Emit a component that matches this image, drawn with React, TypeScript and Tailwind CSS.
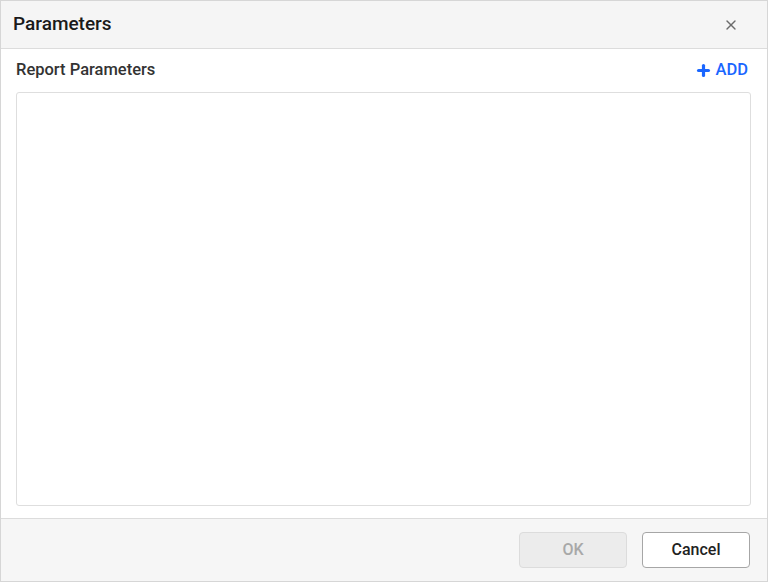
import { Plus, X } from "lucide-react";

export default function App() {
  return (
    <div
      className="flex h-[582px] w-[768px] flex-col border border-[#d6d6d6] bg-white"
      style={{ fontFamily: "Roboto, 'Liberation Sans', sans-serif" }}
    >
      {/* header */}
      <div className="flex h-[48px] shrink-0 items-center justify-between border-b border-[#dcdcdc] bg-[#f5f5f5] pl-[12px] pr-[28px]">
        <span className="text-[19px] font-medium text-[#1a1a1a]">Parameters</span>
        <X size={16} strokeWidth={2} className="text-[#6b6b6b]" />
      </div>

      {/* body */}
      <div className="flex flex-1 flex-col pl-[15px] pr-[16px] pb-[12px]">
        <div className="flex h-[43px] items-center justify-between">
          <span className="text-[16.5px] font-medium text-[#333]">Report Parameters</span>
          <button className="mr-[3px] flex items-center gap-[4px] text-[16.5px] font-medium text-[#1a66ff]">
            <Plus size={17} strokeWidth={4.5} />
            ADD
          </button>
        </div>
        <div className="flex-1 rounded-[3px] border border-[#dedede] bg-white" />
      </div>

      {/* footer */}
      <div className="flex h-[63px] shrink-0 items-start justify-end gap-[15px] border-t border-[#dcdcdc] bg-[#f6f6f6] pr-[17px] pt-[13px]">
        <button
          disabled
          className="h-[36px] w-[108px] rounded-[4px] border border-[#dcdcdc] bg-[#ececec] text-[16px] font-medium text-[#a8a8a8]"
        >
          OK
        </button>
        <button className="h-[36px] w-[108px] rounded-[4px] border border-[#a6a6a6] bg-white text-[16px] font-medium text-[#222]">
          Cancel
        </button>
      </div>
    </div>
  );
}
